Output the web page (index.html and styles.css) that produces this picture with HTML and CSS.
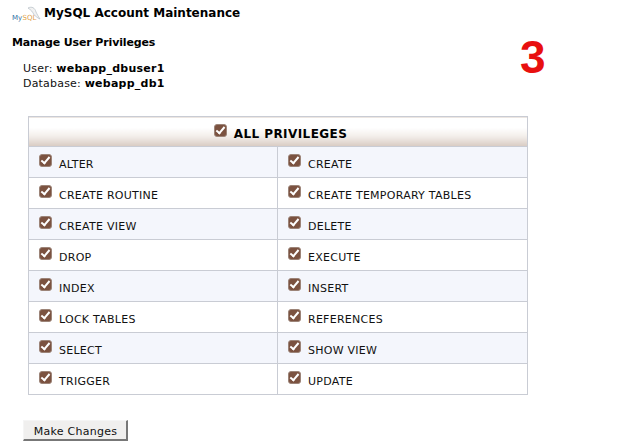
FILE: index.html
```html
<!DOCTYPE html>
<html lang="en">
<head>
  <meta charset="UTF-8" />
  <title>MySQL Account Maintenance</title>
  <link rel="stylesheet" href="styles.css">
</head>
<body>

<header class="title">
  <svg class="logo" width="32" height="22" viewBox="0 0 32 22">
    <path d="M18 8c4-2 7 0 8 4 1 2 2 4 4 7-3-1-4-3-6-4-1-3-3-5-6-7z" fill="#f2f2f2" stroke="#a8b4bc" stroke-width="0.6"/>
    <text x="2" y="20" class="logo-my">My</text>
    <text x="12.5" y="20" class="logo-sql">SQL</text>
  </svg>
  <h1>MySQL Account Maintenance</h1>
</header>

<h2>Manage User Privileges</h2>

<div class="info">
  <div>User: <b>webapp_dbuser1</b></div>
  <div>Database: <b>webapp_db1</b></div>
</div>

<div class="step">3</div>

<table class="privs">
  <colgroup>
    <col class="col-left">
    <col>
  </colgroup>
  <tr>
    <th colspan="2"><span class="check"></span><span class="all">ALL PRIVILEGES</span></th>
  </tr>
  <tr class="odd">
    <td><span class="check"></span>ALTER</td>
    <td><span class="check"></span>CREATE</td>
  </tr>
  <tr>
    <td><span class="check"></span>CREATE ROUTINE</td>
    <td><span class="check"></span>CREATE TEMPORARY TABLES</td>
  </tr>
  <tr class="odd">
    <td><span class="check"></span>CREATE VIEW</td>
    <td><span class="check"></span>DELETE</td>
  </tr>
  <tr>
    <td><span class="check"></span>DROP</td>
    <td><span class="check"></span>EXECUTE</td>
  </tr>
  <tr class="odd">
    <td><span class="check"></span>INDEX</td>
    <td><span class="check"></span>INSERT</td>
  </tr>
  <tr>
    <td><span class="check"></span>LOCK TABLES</td>
    <td><span class="check"></span>REFERENCES</td>
  </tr>
  <tr class="odd">
    <td><span class="check"></span>SELECT</td>
    <td><span class="check"></span>SHOW VIEW</td>
  </tr>
  <tr>
    <td><span class="check"></span>TRIGGER</td>
    <td><span class="check"></span>UPDATE</td>
  </tr>
</table>

<button class="submit" type="button">Make Changes</button>

</body>
</html>
```

FILE: styles.css
```css
html, body {
  height: 447px;
  overflow: hidden;
}

body {
  font-family: "DejaVu Sans", sans-serif;
  font-size: 11px;
  background-color: #fff;
  color: #111;
  margin: 0;
  padding: 0 0 0 12px;
  position: relative;
}

.title {
  display: flex;
  align-items: flex-start;
  height: 29px;
  margin-left: -2px;
}

.logo {
  flex: none;
  margin-right: 2px;
}

.logo-my, .logo-sql {
  font-family: "DejaVu Sans", sans-serif;
  font-size: 7px;
}

.logo-my {
  fill: #2f70a4;
}

.logo-sql {
  fill: #dfa24a;
}

h1 {
  font-size: 12px;
  line-height: 15px;
  margin: 6px 0 0;
  color: #000;
}

h2 {
  font-size: 11px;
  line-height: 14px;
  margin: 7px 0 0;
  letter-spacing: -0.14px;
  color: #000;
}

.info {
  margin: 11px 0 0 11px;
  line-height: 15px;
  letter-spacing: 0.2px;
}

.info b {
  letter-spacing: 0.25px;
  color: #000;
}

.step {
  position: absolute;
  top: 31px;
  left: 520px;
  font-family: "Liberation Sans", sans-serif;
  font-size: 46px;
  line-height: 53px;
  font-weight: bold;
  color: #e8100f;
}

.privs {
  width: 500px;
  height: 278px;
  margin: 25px 0 0 16px;
  border-collapse: collapse;
  table-layout: fixed;
  border: 1px solid #c9ccd4;
}

.col-left {
  width: 249px;
}

.privs th {
  height: 29px;
  padding: 0 0 0 5px;
  font-size: 12px;
  color: #000;
  background: linear-gradient(to bottom, #fff 0%, #fff 35%, #f3eeea 65%, #d8cbc2 100%);
  border-bottom: 1px solid #c9ccd4;
}

.privs td {
  height: 30px;
  padding: 0 0 0 10px;
  letter-spacing: 0.26px;
  background-color: #fff;
  border: 1px solid #c9ccd4;
}

.privs tr.odd td {
  background-color: #f4f6fc;
}

.check {
  display: inline-block;
  box-sizing: border-box;
  width: 13px;
  height: 13px;
  margin-right: 7px;
  vertical-align: 1px;
  border: 1px solid #9c8478;
  border-radius: 3px;
  background-color: #7b5240;
  position: relative;
}

.check::after {
  content: "";
  position: absolute;
  left: 3px;
  top: 0;
  width: 3px;
  height: 7px;
  box-sizing: content-box;
  border: solid #fff;
  border-width: 0 2px 2px 0;
  transform: rotate(40deg);
}

th .check {
  vertical-align: 0;
}

.all {
  position: relative;
  top: 1px;
  letter-spacing: 0.42px;
}

.submit {
  display: block;
  margin: 25px 0 0 11px;
  width: 105px;
  height: 21px;
  padding: 3px 0 0 1px;
  font-family: "DejaVu Sans", sans-serif;
  font-size: 11px;
  letter-spacing: 0.25px;
  color: #111;
  background: #f0efee;
  border: 1px solid;
  border-color: #f5f5f5 #777 #777 #f5f5f5;
  border-width: 1px 2px 2px 1px;
}
```
